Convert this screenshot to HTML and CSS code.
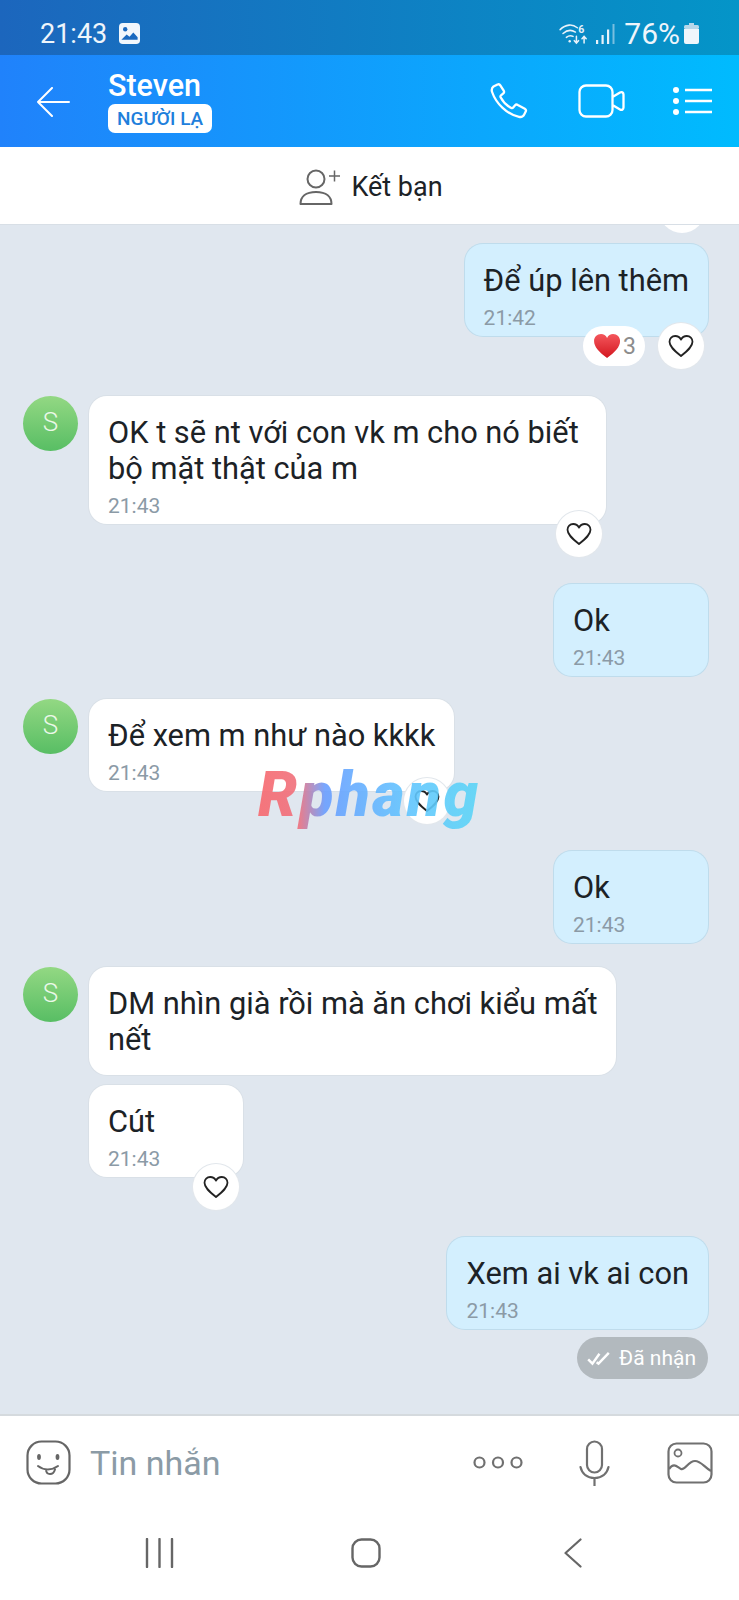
FILE: index.html
```html
<!DOCTYPE html>
<html lang="vi">
<head>
    <meta charset="UTF-8">
    <meta name="viewport" content="width=device-width, initial-scale=1.0">
    <title>Steven</title>
    <link rel="stylesheet" href="styles.css">
</head>
<body>
    <svg class="defs" width="0" height="0">
        <symbol id="heart" viewBox="0 0 26 24">
            <path d="M13 22C6 16.5 1.5 12.5 1.5 7.8 1.500 4.500 4 2 7.200 2 9.600 2 11.800 3.300 13 5.600 14.200 3.300 16.400 2 18.800 2 22 2 24.500 4.500 24.500 7.800 24.500 12.500 20 16.500 13 22Z" fill="none" stroke="#222" stroke-width="1.800" stroke-linejoin="round"/>
        </symbol>
    </svg>

    <!-- Status bar -->
    <div class="statusbar">
        <div class="status-left">
            <span>21:43</span>
            <svg class="status-pic" viewBox="0 0 22 22">
                <rect width="22" height="22" rx="4" fill="#f2f7fc"/>
                <circle cx="6.500" cy="6.500" r="2.300" fill="#1b69bf"/>
                <path d="M2.500 17.500 8 12l3 2.500 4-4.500 4.500 5v2.500z" fill="#1b69bf"/>
            </svg>
        </div>
        <div class="status-right">
            <svg class="status-wifi" viewBox="0 0 32 24">
                <g fill="none" stroke="#e8f2fa" stroke-width="1.600" stroke-linecap="round">
                    <path d="M1 8C7 2 14 2 19 6"/>
                    <path d="M4 12C8.500 8 13 8 17 10.500"/>
                    <path d="M7.500 16C10 14 12.500 14 14.500 15"/>
                    <path d="M18 15v7M15.800 19.500 18 22l2.200-2.500M26 22v-7M23.800 17.500 26 15l2.200 2.500"/>
                </g>
                <circle cx="11" cy="20" r="1.300" fill="#e8f2fa"/>
                <text x="20" y="11" class="wifi-six">6</text>
            </svg>
            <svg class="status-signal" viewBox="0 0 19 20">
                <g fill="#e8f2fa">
                    <rect x="0" y="16" width="2.200" height="4"/>
                    <rect x="5.500" y="11" width="2.200" height="9"/>
                    <rect x="11" y="5.500" width="2.200" height="14.500"/>
                    <rect x="16.500" y="0" width="2" height="20" opacity=".5"/>
                </g>
            </svg>
            <span class="status-pct">76%</span>
            <svg class="status-batt" viewBox="0 0 15 21">
                <path d="M5 0h5v2.500H5z" fill="#b7d8ea"/>
                <rect y="2" width="15" height="4" rx="1.500" fill="#b7d8ea"/>
                <path d="M0 6h15v13a2 2 0 0 1-2 2H2a2 2 0 0 1-2-2z" fill="#eef6fb"/>
            </svg>
        </div>
    </div>

    <!-- Header -->
    <header class="topbar">
        <svg class="back" viewBox="0 0 34 30">
            <path d="M33 15H2M16 1 2 15l14 14" fill="none" stroke="#fff" stroke-width="2" stroke-linecap="round" stroke-linejoin="round"/>
        </svg>
        <div class="who">
            <div class="name">Steven</div>
            <div class="badge">NGƯỜI LẠ</div>
        </div>
        <div class="top-actions">
            <svg class="ic-phone" viewBox="0 0 38 37">
                <path d="M3.500 3.500 7.500 1.500c1.200-.5 2.200-.2 2.800.8l3.400 5.400c.6 1 .4 2-.4 2.700l-2.300 1.900c-.6.5-.7 1.200-.4 1.900 2.300 4.500 6 8.400 10.700 10.800.7.300 1.400.2 1.900-.4l1.900-2.300c.7-.8 1.700-1 2.700-.4l7 3.800c1 .6 1.500 1.700.9 2.900l-1.500 2.900c-1 1.900-3 2.900-5.200 2.300C17.300 31.700 6 20.500 2.100 9 1.400 6.800 1.900 4.700 3.500 3.500Z" fill="none" stroke="#fff" stroke-width="2.300" stroke-linejoin="round"/>
            </svg>
            <svg class="ic-video" viewBox="0 0 47 34">
                <path d="M8 1.500h20a6.500 6.500 0 0 1 6.500 6.500v18a6.500 6.500 0 0 1-6.500 6.500H8A6.500 6.500 0 0 1 1.500 26V8A6.500 6.500 0 0 1 8 1.500ZM34.500 13l7.500-4.500c1.700-1 3.500 0 3.500 2v13c0 2-1.800 3-3.500 2L34.500 21" fill="none" stroke="#fff" stroke-width="2.300" stroke-linejoin="round"/>
            </svg>
            <svg class="ic-list" viewBox="0 0 39 28">
                <circle cx="3" cy="3" r="3" fill="#fff"/>
                <circle cx="3" cy="14" r="3" fill="#fff"/>
                <circle cx="3" cy="25" r="3" fill="#fff"/>
                <path d="M12 3h27M12 14h27M12 25h27" stroke="#fff" stroke-width="2.300"/>
            </svg>
        </div>
    </header>

    <!-- Add friend -->
    <div class="friendbar">
        <svg class="ic-addfriend" viewBox="0 0 42 38">
            <circle cx="17" cy="11" r="8.500" fill="none" stroke="#666" stroke-width="2"/>
            <path d="M1.500 36c0-7 5-12 15.500-12s15.500 5 15.500 12z" fill="none" stroke="#666" stroke-width="2" stroke-linejoin="round"/>
            <path d="M30 8h11M35.500 2.500v11" stroke="#666" stroke-width="1.500"/>
        </svg>
        <span>Kết bạn</span>
    </div>

    <!-- Messages -->
    <main class="chat">
        <div class="cut-reaction"></div>

        <div class="row out first">
            <div class="bubble">
                <div class="msg">Để úp lên thêm</div>
                <div class="time">21:42</div>
                <div class="reactions">
                    <span class="react-count"><i class="red-heart"></i>3</span>
                    <span class="react"><svg class="heart"><use href="#heart"/></svg></span>
                </div>
            </div>
        </div>

        <div class="row in far">
            <div class="avatar">S</div>
            <div class="bubble wide">
                <div class="msg">OK t sẽ nt với con vk m cho nó biết<br>bộ mặt thật của m</div>
                <div class="time">21:43</div>
                <div class="reactions">
                    <span class="react"><svg class="heart"><use href="#heart"/></svg></span>
                </div>
            </div>
        </div>

        <div class="row out far">
            <div class="bubble">
                <div class="msg">Ok</div>
                <div class="time">21:43</div>
            </div>
        </div>

        <div class="row in mid tight-top">
            <div class="avatar">S</div>
            <div class="bubble">
                <div class="msg">Để xem m như nào kkkk</div>
                <div class="time">21:43</div>
                <div class="reactions">
                    <span class="react"><svg class="heart"><use href="#heart"/></svg></span>
                </div>
            </div>
        </div>

        <div class="row out far">
            <div class="bubble">
                <div class="msg">Ok</div>
                <div class="time">21:43</div>
            </div>
        </div>

        <div class="row in mid">
            <div class="avatar">S</div>
            <div class="bubble no-time">
                <div class="msg">DM nhìn già rồi mà ăn chơi kiểu mất<br>nết</div>
            </div>
        </div>

        <div class="row in near">
            <div class="avatar ghost"></div>
            <div class="bubble">
                <div class="msg">Cút</div>
                <div class="time">21:43</div>
                <div class="reactions">
                    <span class="react"><svg class="heart"><use href="#heart"/></svg></span>
                </div>
            </div>
        </div>

        <div class="row out far">
            <div class="bubble">
                <div class="msg">Xem ai vk ai con</div>
                <div class="time">21:43</div>
            </div>
        </div>

        <div class="row out pill-row">
            <div class="received">
                <svg class="ic-check" viewBox="0 0 24 16">
                    <path d="M1 9l4.500 4.500L13 3M10 12l2 1.500L23 2" fill="none" stroke="#fff" stroke-width="2.600"/>
                </svg>
                Đã nhận
            </div>
        </div>

        <div class="watermark">Rphang</div>
    </main>

    <!-- Composer -->
    <div class="composer">
        <svg class="ic-smile" viewBox="0 0 45 45">
            <rect x="1.500" y="1.500" width="42" height="42" rx="14" fill="none" stroke="#666" stroke-width="2.200"/>
            <ellipse cx="13" cy="17" rx="1.900" ry="3" fill="#666"/>
            <ellipse cx="31.500" cy="17" rx="1.900" ry="3" fill="#666"/>
            <path d="M12 26c5 4 13 5 20 0M20 30c.5 5 7 6 9-.5" fill="none" stroke="#666" stroke-width="2" stroke-linecap="round"/>
        </svg>
        <div class="placeholder">Tin nhắn</div>
        <svg class="ic-more" viewBox="0 0 50 13">
            <circle cx="6.500" cy="6.500" r="5" fill="none" stroke="#707070" stroke-width="2.200"/>
            <circle cx="25" cy="6.500" r="5" fill="none" stroke="#707070" stroke-width="2.200"/>
            <circle cx="43.500" cy="6.500" r="5" fill="none" stroke="#707070" stroke-width="2.200"/>
        </svg>
        <svg class="ic-mic" viewBox="0 0 31 46">
            <rect x="8" y="1.500" width="15" height="31" rx="7.500" fill="none" stroke="#707070" stroke-width="2.200"/>
            <path d="M1.500 27c1.500 7 7 11 14 11s12.500-4 14-11M15.500 38v8" fill="none" stroke="#707070" stroke-width="2.200" stroke-linecap="round"/>
        </svg>
        <svg class="ic-gallery" viewBox="0 0 46 42">
            <rect x="1.500" y="1.500" width="43" height="39" rx="8" fill="none" stroke="#707070" stroke-width="2.200"/>
            <circle cx="11" cy="11" r="3.500" fill="none" stroke="#707070" stroke-width="1.800"/>
            <path d="M2 27c5-7 8-2 12 0s7-8 14-8c6 0 9 6 16 10" fill="none" stroke="#707070" stroke-width="2.200"/>
        </svg>
    </div>

    <!-- Android nav -->
    <nav class="navbar">
        <svg class="ic-recents" viewBox="0 0 29 30">
            <path d="M2 1v28M14.500 1v28M27 1v28" stroke="#666" stroke-width="2.400" stroke-linecap="round"/>
        </svg>
        <svg class="ic-home" viewBox="0 0 30 30">
            <rect x="1.500" y="1.500" width="27" height="27" rx="9" fill="none" stroke="#666" stroke-width="2.400"/>
        </svg>
        <svg class="ic-navback" viewBox="0 0 18 30">
            <path d="M16.500 1.500 1.500 15l15 13.500" fill="none" stroke="#666" stroke-width="2.200" stroke-linecap="round" stroke-linejoin="round"/>
        </svg>
    </nav>
</body>
</html>
```

FILE: styles.css
```css
/* General */
body {
    margin: 0;
    width: 739px;
    height: 1600px;
    overflow: hidden;
    font-family: Roboto, sans-serif;
    background-color: #fff;
    color: #1c2226;
}

.defs {
    position: absolute;
}

svg {
    display: block;
    flex: none;
}

/* Status bar */
.statusbar {
    height: 55px;
    box-sizing: border-box;
    padding: 12px 40px 0 40px;
    display: flex;
    justify-content: space-between;
    align-items: center;
    background: linear-gradient(90deg, #1c66bd, #0495c8);
    color: #eef5fb;
    font-size: 27px;
}

.status-left,
.status-right {
    display: flex;
    align-items: center;
}

.status-left {
    gap: 12px;
}

.status-pic {
    width: 21px;
    height: 21px;
}

.status-wifi {
    width: 31px;
    height: 23px;
}

.wifi-six {
    font-size: 11px;
    font-weight: 700;
    fill: #e8f2fa;
}

.status-signal {
    width: 19px;
    height: 20px;
    margin-left: 6px;
}

.status-pct {
    margin-left: 9px;
    font-size: 30px;
}

.status-batt {
    width: 15px;
    height: 21px;
    margin-left: 4px;
}

/* Header */
.topbar {
    height: 92px;
    box-sizing: border-box;
    padding: 0 27px 0 36px;
    display: flex;
    align-items: center;
    background: linear-gradient(90deg, #2082fb, #00bbfe);
    color: #fff;
}

.back {
    width: 34px;
    height: 30px;
    margin: 2px 38px 0 0;
}

.who {
    flex: 1;
}

.name {
    font-size: 30.5px;
    font-weight: 500;
    line-height: 32px;
}

.badge {
    display: inline-block;
    margin-top: 2px;
    padding: 0 9px;
    background-color: #fff;
    color: #1f80dc;
    border-radius: 7px;
    font-size: 19px;
    font-weight: 500;
    line-height: 29px;
}

.top-actions {
    display: flex;
    align-items: center;
    gap: 48px;
}

.ic-phone {
    width: 38px;
    height: 37px;
    margin-right: 2px;
}

.ic-video {
    width: 47px;
    height: 34px;
}

.ic-list {
    width: 39px;
    height: 28px;
}

/* Add friend bar */
.friendbar {
    height: 77px;
    display: flex;
    justify-content: center;
    align-items: center;
    gap: 10px;
    background-color: #fff;
    font-size: 27px;
    box-sizing: border-box;
    padding: 2px 0 0 3px;
}

.ic-addfriend {
    width: 42px;
    height: 38px;
}

/* Messages */
.chat {
    position: relative;
    height: 1190px;
    box-sizing: border-box;
    padding: 0 31px 0 23px;
    background-color: #e0e7ef;
    border-top: 1px solid #d8dfe6;
    overflow: hidden;
}

.cut-reaction {
    position: absolute;
    top: -38px;
    right: 34px;
    width: 46px;
    height: 46px;
    border-radius: 50%;
    background-color: #fff;
}

.row {
    display: flex;
}

.row.out {
    justify-content: flex-end;
}

.row.first {
    margin-top: 19px;
}

.row.far {
    margin-top: 60px;
}

.row.mid {
    margin-top: 24px;
}

.row.mid.tight-top {
    margin-top: 23px;
}

.row.near {
    margin-top: 10px;
}

.row.pill-row {
    margin-top: 8px;
}

.avatar {
    flex: none;
    width: 55px;
    height: 55px;
    margin-right: 11px;
    border-radius: 50%;
    background: linear-gradient(#93d883, #58be64);
    color: #eaf8e8;
    font-size: 26px;
    font-weight: 300;
    line-height: 53px;
    text-align: center;
}

.avatar.ghost {
    height: 0;
    background: none;
}

.bubble {
    position: relative;
    box-sizing: border-box;
    min-width: 154px;
    padding: 19px 19px 5px;
    background-color: #fff;
    border-radius: 18px;
    box-shadow: 0 0 0 1px #d9e0e7;
}

.out .bubble {
    background-color: #d3effe;
    box-shadow: 0 0 0 1px #bfdcec;
}

.bubble.wide {
    padding-right: 27px;
}

.bubble.no-time {
    padding-bottom: 17px;
}

.msg {
    font-size: 30.8px;
    line-height: 36px;
    white-space: nowrap;
}

.time {
    margin-top: 6px;
    font-size: 21px;
    line-height: 26px;
    color: #8b9aa6;
}

/* Reactions */
.reactions {
    position: absolute;
    right: 4px;
    bottom: -33px;
    display: flex;
    align-items: center;
    gap: 13px;
}

.react {
    display: flex;
    justify-content: center;
    align-items: center;
    width: 46px;
    height: 46px;
    border-radius: 50%;
    background-color: #fff;
    box-shadow: 0 0 0 1px #e2e7ec;
}

.heart {
    width: 26px;
    height: 24px;
}

.react-count {
    display: flex;
    align-items: center;
    gap: 3px;
    height: 40px;
    padding: 0 9px 0 11px;
    border-radius: 20px;
    background-color: #fff;
    color: #8c8c8c;
    font-size: 23px;
}

.red-heart {
    display: block;
    width: 26px;
    height: 24px;
    background: linear-gradient(#f4565c, #d3171f);
    clip-path: path("M13 24C5 18 0 13 0 7 0 3 3 0 7 0 9.500 0 12 1.500 13 4 14 1.500 16.500 0 19 0 23 0 26 3 26 7 26 13 21 18 13 24Z");
}

/* Status pill */
.received {
    display: flex;
    align-items: center;
    gap: 9px;
    height: 42px;
    padding: 0 12px 0 10px;
    border-radius: 21px;
    background-color: #b2b9be;
    color: #fff;
    font-size: 21px;
}

.ic-check {
    width: 23px;
    height: 15px;
}

/* Watermark */
.watermark {
    position: absolute;
    left: 258px;
    top: 530px;
    font-size: 62px;
    font-weight: 900;
    font-style: italic;
    line-height: 80px;
    letter-spacing: 2.500px;
    background: linear-gradient(90deg, #f8696f 0%, #f0707c 18%, #6a9eff 30%, #62c4ff 65%, #5cd6f6 100%);
    -webkit-background-clip: text;
    background-clip: text;
    color: transparent;
    opacity: .9;
}

/* Composer */
.composer {
    height: 95px;
    box-sizing: border-box;
    border-top: 2px solid #d5dade;
    padding: 0 26px;
    display: flex;
    align-items: center;
    background-color: #fff;
}

.ic-smile {
    width: 45px;
    height: 45px;
    margin-right: 19px;
}

.placeholder {
    flex: 1;
    font-size: 34px;
    color: #8b9ba6;
}

.ic-more {
    width: 50px;
    height: 13px;
}

.ic-mic {
    width: 31px;
    height: 46px;
    margin-left: 56px;
}

.ic-gallery {
    width: 46px;
    height: 42px;
    margin-left: 57px;
}

/* Android nav */
.navbar {
    height: 91px;
    box-sizing: border-box;
    padding: 0 157px 4px 145px;
    display: flex;
    justify-content: space-between;
    align-items: center;
    background-color: #fff;
}

.ic-recents {
    width: 29px;
    height: 30px;
}

.ic-home {
    width: 30px;
    height: 30px;
    margin-right: 7px;
}

.ic-navback {
    width: 18px;
    height: 30px;
}
```
